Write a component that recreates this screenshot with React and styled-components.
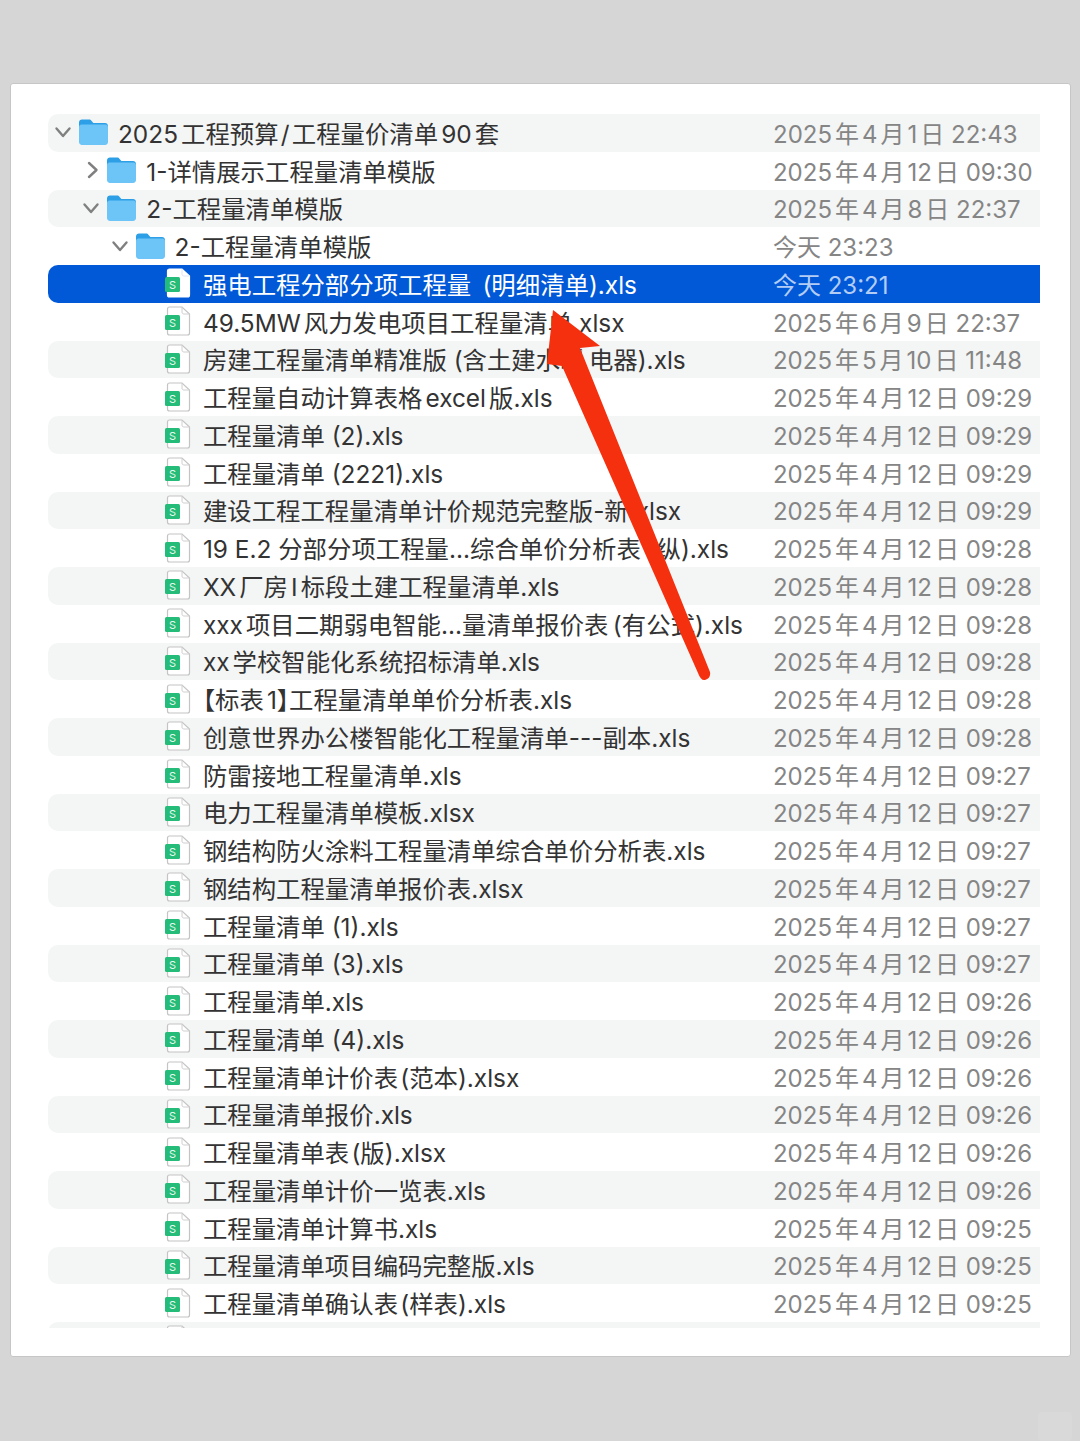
import React from "react";
import styled, { createGlobalStyle } from "styled-components";

const GlobalStyle = createGlobalStyle`
  html, body {
    margin: 0;
    padding: 0;
    background: #d6d6d6;
  }
  body {
    font-family: "Inter", "Noto Sans CJK SC", sans-serif;
  }
`;

const Page = styled.div`
  position: relative;
  width: 1080px;
  height: 1441px;
  padding: 83px 0 0 10px;
  box-sizing: border-box;
  overflow: hidden;
`;

const Card = styled.div`
  width: 1061px;
  height: 1274px;
  box-sizing: border-box;
  padding: 30px 30px 0 37px;
  background: #fff;
  border: 1px solid #c6c6c6;
  border-radius: 3px;
`;

const List = styled.div`
  width: 992px;
  height: 1214px;
  overflow: hidden;
`;

const Row = styled.div`
  display: flex;
  align-items: center;
  box-sizing: border-box;
  height: 37.75px;
  padding-bottom: 1px;
  padding-left: ${(p) => p.$level * 28.3 + 6}px;
  border-radius: 10px 0 0 10px;
  background: ${(p) => (p.$selected ? "#0159d8" : p.$striped ? "#f4f5f5" : "transparent")};
`;

const Toggle = styled.div`
  flex: none;
  width: 18px;
  height: 18px;
  margin-right: 7px;
  color: #808080;
`;

const FolderIcon = styled.svg`
  flex: none;
  width: 29px;
  height: 26px;
  margin-right: 10px;
`;

const FileIcon = styled.svg`
  flex: none;
  width: 26px;
  height: 30px;
  margin: 0 12px 0 1px;
`;

const Name = styled.div`
  width: ${(p) => 655 - p.$level * 28.3}px;
  flex: none;
  font-size: 24.4px;
  white-space: nowrap;
  text-autospace: normal;
  text-spacing-trim: trim-start;
  color: ${(p) => (p.$selected ? "#fff" : "#333")};
`;

const TightBracket = styled.span`
  font-feature-settings: "halt";
`;

const DateCell = styled.div`
  font-size: 24px;
  white-space: nowrap;
  text-autospace: normal;
  color: ${(p) => (p.$selected ? "#b4cdf5" : "#858585")};
`;

const ArrowLayer = styled.svg`
  position: absolute;
  left: 0;
  top: 0;
  width: 1080px;
  height: 1441px;
  pointer-events: none;
`;

const Watermark = styled.div`
  position: absolute;
  left: 1038px;
  top: 1412px;
  width: 34px;
  height: 29px;
  border-radius: 4px;
  background: #d9d9d9;
`;

const Chevron = ({ open }) => (
  <Toggle>
    <svg width="18" height="18" viewBox="0 0 18 18" fill="none" stroke="currentColor" strokeWidth="2.4" strokeLinecap="round" strokeLinejoin="round">
      {open ? <path d="M2.5 5.5 9 13l6.500-7.500" /> : <path d="M7 2 14.500 9 7 16" />}
    </svg>
  </Toggle>
);

const Folder = () => (
  <FolderIcon viewBox="0 0 29 26">
    <path d="M3 0.5h7c1.200 0 1.800.5 2.600 1.400L14.400 4H26c1.700 0 3 1.300 3 3v2H0V3.500C0 1.800 1.300.5 3 .5z" fill="#2c9fe6" />
    <path d="M2.500 5.500H26.500c1.400 0 2.500 1.100 2.500 2.500v15c0 1.600-1.300 3-3 3H3c-1.700 0-3-1.400-3-3V8c0-1.400 1.100-2.500 2.500-2.500z" fill="#6cc4f7" />
  </FolderIcon>
);

const XlsFile = ({ selected, blank }) => (
  <FileIcon viewBox="0 0 26 30">
    <path d="M4.500 1h12.500L24.500 8v19c0 1.200-.8 2-2 2h-18c-1.200 0-2-.8-2-2V3c0-1.200.8-2 2-2z" fill="#fff" stroke={selected ? "#fff" : "#c4c4c4"} strokeWidth="1.200" />
    <path d="M17 1v5c0 1.300.7 2 2 2h5.500" fill="none" stroke={selected ? "#dfe6f2" : "#d0d0d0"} strokeWidth="1" />
    {!blank && (
      <>
        <rect x="0" y="9" width="15" height="15" rx="1.500" fill="#25bb78" />
        <text x="7.500" y="20.500" textAnchor="middle" fontSize="11" fontFamily="Inter, sans-serif" fill="#e6f8ef">S</text>
      </>
    )}
  </FileIcon>
);

const rows = [
  { level: 0, kind: "open", name: "2025工程预算\u200a/\u200a工程量价清单90套", date: "2025年4月1日 22:43" },
  { level: 1, kind: "closed", name: "1-详情展示工程量清单模版", date: "2025年4月12日 09:30" },
  { level: 1, kind: "open", name: "2-工程量清单模版", date: "2025年4月8日 22:37" },
  { level: 2, kind: "open", name: "2-工程量清单模版", date: "今天 23:23" },
  { level: 3, name: "强电工程分部分项工程量 \u2009(明细清单).xls", date: "今天 23:21", selected: true },
  { level: 3, name: "49.5MW风力发电项目工程量清单.xlsx", date: "2025年6月9日 22:37" },
  { level: 3, name: "房建工程量清单精准版 (含土建水暖\u2009电器).xls", date: "2025年5月10日 11:48" },
  { level: 3, name: "工程量自动计算表格excel版.xls", date: "2025年4月12日 09:29" },
  { level: 3, name: "工程量清单 (2).xls", date: "2025年4月12日 09:29" },
  { level: 3, name: "工程量清单 (2221).xls", date: "2025年4月12日 09:29" },
  { level: 3, name: "建设工程工程量清单计价规范完整版-新.xlsx", date: "2025年4月12日 09:29" },
  { level: 3, name: "19 E.2 分部分项工程量...综合单价分析表 (纵).xls", date: "2025年4月12日 09:28" },
  { level: 3, name: "XX厂房I标段土建工程量清单.xls", date: "2025年4月12日 09:28" },
  { level: 3, name: "xxx项目二期弱电智能...量清单报价表\u2009(有公式).xls", date: "2025年4月12日 09:28" },
  { level: 3, name: "xx学校智能化系统招标清单.xls", date: "2025年4月12日 09:28" },
  { level: 3, name: <>【标表1<TightBracket>】</TightBracket>工程量清单单价分析表.xls</>, date: "2025年4月12日 09:28" },
  { level: 3, name: "创意世界办公楼智能化工程量清单---副本.xls", date: "2025年4月12日 09:28" },
  { level: 3, name: "防雷接地工程量清单.xls", date: "2025年4月12日 09:27" },
  { level: 3, name: "电力工程量清单模板.xlsx", date: "2025年4月12日 09:27" },
  { level: 3, name: "钢结构防火涂料工程量清单综合单价分析表.xls", date: "2025年4月12日 09:27" },
  { level: 3, name: "钢结构工程量清单报价表.xlsx", date: "2025年4月12日 09:27" },
  { level: 3, name: "工程量清单 (1).xls", date: "2025年4月12日 09:27" },
  { level: 3, name: "工程量清单 (3).xls", date: "2025年4月12日 09:27" },
  { level: 3, name: "工程量清单.xls", date: "2025年4月12日 09:26" },
  { level: 3, name: "工程量清单 (4).xls", date: "2025年4月12日 09:26" },
  { level: 3, name: "工程量清单计价表\u200a(范本).xlsx", date: "2025年4月12日 09:26" },
  { level: 3, name: "工程量清单报价.xls", date: "2025年4月12日 09:26" },
  { level: 3, name: "工程量清单表\u200a(版).xlsx", date: "2025年4月12日 09:26" },
  { level: 3, name: "工程量清单计价一览表.xls", date: "2025年4月12日 09:26" },
  { level: 3, name: "工程量清单计算书.xls", date: "2025年4月12日 09:25" },
  { level: 3, name: "工程量清单项目编码完整版.xls", date: "2025年4月12日 09:25" },
  { level: 3, name: "工程量清单确认表\u200a(样表).xls", date: "2025年4月12日 09:25" },
  { level: 3, name: "", date: "", blank: true },
];

export default function App() {
  return (
    <Page>
      <GlobalStyle />
      <Card>
        <List>
          {rows.map((r, i) => (
            <Row key={i} $level={r.level} $striped={i % 2 === 0} $selected={r.selected}>
              {r.kind ? <Chevron open={r.kind === "open"} /> : <Toggle />}
              {r.kind ? <Folder /> : <XlsFile selected={r.selected} blank={r.blank} />}
              <Name $level={r.level} $selected={r.selected}>{r.name}</Name>
              <DateCell $selected={r.selected}>{r.date}</DateCell>
            </Row>
          ))}
        </List>
      </Card>
      <ArrowLayer viewBox="0 0 1080 1441">
        <path d="M553 310 600 346 580 348 710 672Q711 678 705 680 701 681 698 673L562 366 547 364z" fill="#f5300f" />
      </ArrowLayer>
      <Watermark />
    </Page>
  );
}
